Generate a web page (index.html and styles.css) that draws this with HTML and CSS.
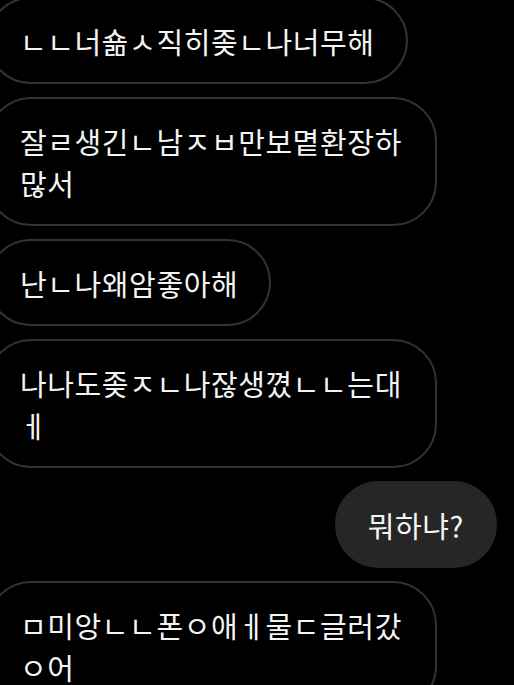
FILE: index.html
```html
<!DOCTYPE html>
<html lang="ko">
<head>
<meta charset="utf-8">
<link rel="stylesheet" href="styles.css">
</head>
<body>
<div class="chat">
  <div class="msg in">ㄴㄴ너숆ㅅ직히좆ㄴ나너무해</div>
  <div class="msg in">잘ㄹ생긴ㄴ남ㅈㅂ만보몉환장하많서</div>
  <div class="msg in">난ㄴ나왜암좋아해</div>
  <div class="msg in">나나도좆ㅈㄴ나잖생꼈ㄴㄴ는대ㅔ</div>
  <div class="msg out">뭐하냐?</div>
  <div class="msg in">ㅁ미앙ㄴㄴ폰ㅇ애ㅔ물ㄷ글러갔ㅇ어</div>
</div>
</body>
</html>
```

FILE: styles.css
```css
html, body {
  margin: 0;
  padding: 0;
  background: #000;
  overflow: hidden;
}
body {
  width: 514px;
  height: 685px;
}
.chat {
  display: flex;
  flex-direction: column;
  align-items: flex-start;
  gap: 13px;
  margin-top: -3px;
  margin-left: -13px;
  width: 510px;
}
.msg {
  box-sizing: border-box;
  padding: 20.5px 31px;
  border-radius: 44px;
  font-family: "Noto Sans CJK KR", "Noto Sans", sans-serif;
  font-size: 29px;
  letter-spacing: 0.6px;
  line-height: 42px;
  color: #f4f4f4;
  word-break: break-all;
}
.in {
  max-width: 450px;
  border: 2px solid #333333;
  background: #000;
}
.out {
  align-self: flex-end;
  border: 2px solid #262626;
  background: #262626;
}
```
